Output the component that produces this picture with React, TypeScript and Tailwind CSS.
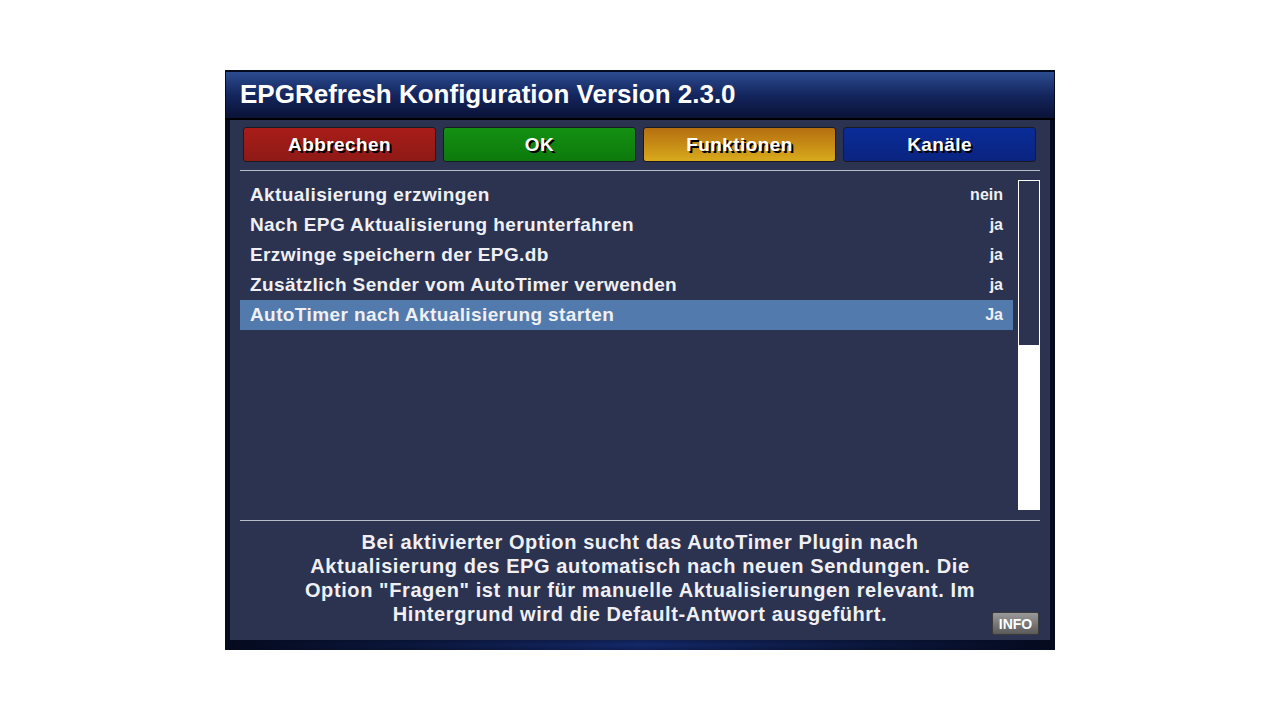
const rows = [
  { label: "Aktualisierung erzwingen", value: "nein" },
  { label: "Nach EPG Aktualisierung herunterfahren", value: "ja" },
  { label: "Erzwinge speichern der EPG.db", value: "ja" },
  { label: "Zusätzlich Sender vom AutoTimer verwenden", value: "ja" },
  { label: "AutoTimer nach Aktualisierung starten", value: "Ja", selected: true },
];

const buttons = [
  { label: "Abbrechen", cls: "bg-gradient-to-b from-[#a81c18] to-[#8e1a16]" },
  { label: "OK", cls: "bg-gradient-to-b from-[#149012] to-[#0c7a0c]" },
  { label: "Funktionen", cls: "bg-gradient-to-b from-[#b46e10] to-[#d8aa1c]" },
  { label: "Kanäle", cls: "bg-gradient-to-b from-[#0a2c98] to-[#0a2480]" },
];

export default function App() {
  return (
    <div className="w-[1280px] h-[720px] bg-white flex justify-center pt-[70px] font-['Liberation_Sans',Arial,sans-serif]">
      <div className="w-[830px] h-[580px] bg-[#050a1e] flex flex-col">
        {/* title bar */}
        <div className="mt-[2px] h-[46px] mx-[1px] bg-gradient-to-b from-[#2c4c90] via-[#14265e] to-[#0a1236] flex items-center px-[14px]">
          <h1 className="text-white font-bold text-[26px] leading-none pb-[2px]">
            EPGRefresh Konfiguration Version 2.3.0
          </h1>
        </div>
        <div className="h-[2px] bg-black" />

        {/* panel */}
        <div className="mx-[5px] h-[520px] bg-[#2b3350] px-[10px] flex flex-col">
          <div className="flex gap-[7px] pt-[7px] px-[3px]">
            {buttons.map((b) => (
              <div
                key={b.label}
                className={`w-[193px] h-[35px] rounded-[3px] border border-[#1a1a24] flex items-center justify-center ${b.cls}`}
              >
                <span className="text-white font-bold text-[19px] leading-none tracking-[0.4px] pb-[1px] [text-shadow:2px_2px_0_#000]">
                  {b.label}
                </span>
              </div>
            ))}
          </div>
          <div className="mt-[8px] h-px bg-[#b8bcc8]" />

          <div className="flex gap-[5px] mt-[9px] h-[330px]">
            <div className="flex-1 flex flex-col">
              {rows.map((r) => (
                <div
                  key={r.label}
                  className={`h-[30px] flex items-center justify-between pl-[10px] pr-[10px] ${r.selected ? "bg-[#527aac]" : ""}`}
                >
                  <span className="text-[#f0f0f4] font-bold text-[19px] leading-none tracking-[0.4px] pb-[2px]">{r.label}</span>
                  <span className="text-[#f0f0f4] font-bold text-[16px] leading-none">{r.value}</span>
                </div>
              ))}
            </div>
            <div className="w-[22px] h-[330px] border border-white bg-white flex flex-col">
              <div className="h-[164px] bg-[#2b3350]" />
            </div>
          </div>

          <div className="mt-[10px] h-px bg-[#b8bcc8]" />

          <div className="relative flex-1">
            <p className="text-center text-[#f0f0f4] font-bold text-[20px] leading-[24px] tracking-[0.6px] pt-[9px] px-[40px]">
              Bei aktivierter Option sucht das AutoTimer Plugin nach
              <br />
              Aktualisierung des EPG automatisch nach neuen Sendungen. Die
              <br />
              Option "Fragen" ist nur für manuelle Aktualisierungen relevant. Im
              <br />
              Hintergrund wird die Default-Antwort ausgeführt.
            </p>
            <div className="absolute right-[1px] bottom-[5px] w-[47px] h-[23px] rounded-[2px] border border-[#3a3a3a] bg-gradient-to-b from-[#9a9a9a] to-[#5a5a5a] flex items-center justify-center">
              <span className="text-white font-bold text-[14px] leading-none">INFO</span>
            </div>
          </div>
        </div>

        <div className="flex-1 bg-gradient-to-b from-[#050a1e] via-[#0c1a4a] to-[#050a1e]">
          <div className="h-full bg-gradient-to-r from-[#050a1e] via-[#2040a0]/40 to-[#050a1e]" />
        </div>
      </div>
    </div>
  );
}
